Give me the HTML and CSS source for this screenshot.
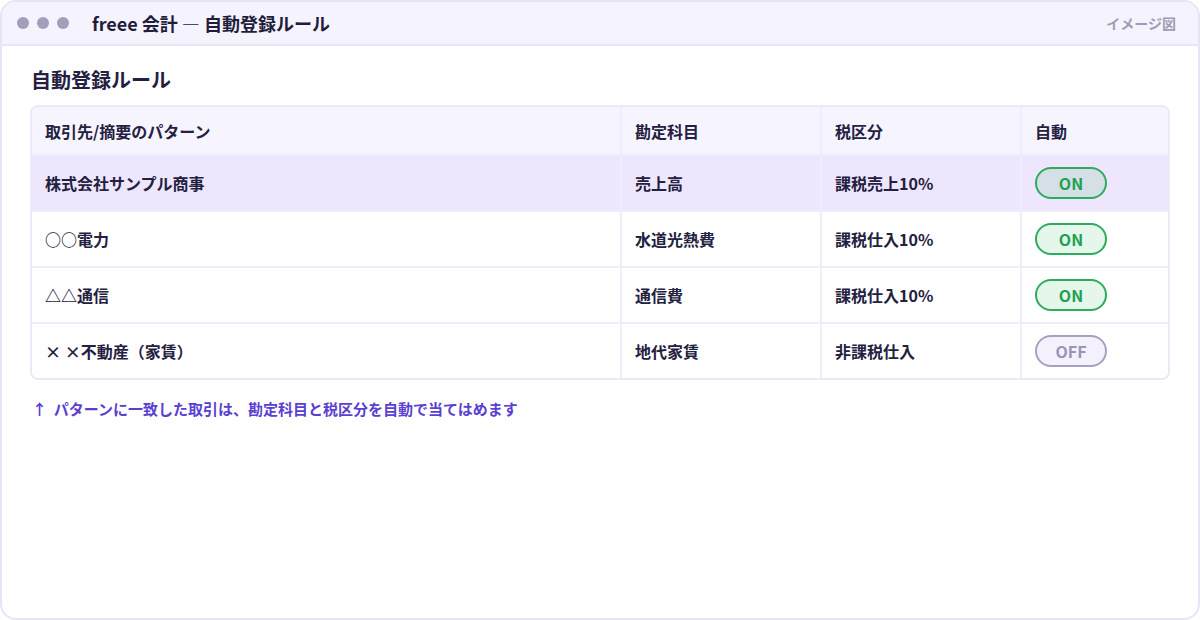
FILE: index.html
```html
<!DOCTYPE html>
<html lang="ja">
<head>
    <meta charset="UTF-8">
    <meta name="viewport" content="width=device-width, initial-scale=1.0">
    <title>freee 会計 — 自動登録ルール</title>
    <link rel="stylesheet" href="styles.css">
</head>
<body>
    <div class="window">
        <div class="titlebar">
            <div class="dots">
                <span class="dot"></span>
                <span class="dot"></span>
                <span class="dot"></span>
            </div>
            <div class="title">freee 会計 — 自動登録ルール</div>
            <div class="tag">イメージ図</div>
        </div>

        <div class="content">
            <h1>自動登録ルール</h1>

            <div class="table-box">
                <table class="rules">
                    <colgroup>
                        <col class="c-pattern">
                        <col class="c-account">
                        <col class="c-tax">
                        <col class="c-auto">
                    </colgroup>
                    <tr>
                        <th>取引先/摘要のパターン</th>
                        <th>勘定科目</th>
                        <th>税区分</th>
                        <th>自動</th>
                    </tr>
                    <tr class="selected">
                        <td>株式会社サンプル商事</td>
                        <td>売上高</td>
                        <td>課税売上10%</td>
                        <td><span class="toggle on">ON</span></td>
                    </tr>
                    <tr>
                        <td>○○電力</td>
                        <td>水道光熱費</td>
                        <td>課税仕入10%</td>
                        <td><span class="toggle on">ON</span></td>
                    </tr>
                    <tr>
                        <td>△△通信</td>
                        <td>通信費</td>
                        <td>課税仕入10%</td>
                        <td><span class="toggle on">ON</span></td>
                    </tr>
                    <tr>
                        <td>× ×不動産（家賃）</td>
                        <td>地代家賃</td>
                        <td>非課税仕入</td>
                        <td><span class="toggle off">OFF</span></td>
                    </tr>
                </table>
            </div>

            <p class="note">↑&nbsp; パターンに一致した取引は、勘定科目と税区分を自動で当てはめます</p>
        </div>
    </div>
</body>
</html>
```

FILE: styles.css
```css
body {
    margin: 0;
    padding: 0;
    font-family: "Noto Sans CJK JP", "Noto Sans", sans-serif;
    color: #23213f;
    background: #ffffff;
}

.window {
    box-sizing: border-box;
    width: 1200px;
    height: 620px;
    border: 2px solid #e7e4f6;
    border-radius: 16px;
    overflow: hidden;
    background: #ffffff;
}

.titlebar {
    display: flex;
    align-items: center;
    height: 42px;
    padding: 0 22px 0 15px;
    background: #f5f3fd;
    border-bottom: 2px solid #e9e5f8;
}

.dots {
    display: flex;
    gap: 8px;
}

.dot {
    width: 12px;
    height: 12px;
    border-radius: 50%;
    background: #a39fbb;
}

.title {
    margin-left: 23px;
    font-size: 18px;
    font-weight: 600;
    color: #1f1d3b;
}

.tag {
    margin-left: auto;
    font-size: 14px;
    font-weight: 600;
    color: #a09cb5;
}

.content {
    padding: 20px 28px 0 28px;
}

h1 {
    margin: 0 0 11px 1px;
    font-size: 20px;
    line-height: 28px;
    font-weight: 700;
    color: #23213f;
}

.table-box {
    border: 2px solid #ebe8f8;
    border-radius: 8px;
    overflow: hidden;
}

.rules {
    width: 100%;
    border-collapse: collapse;
    table-layout: fixed;
}

.c-pattern { width: 589px; }
.c-account { width: 200px; }
.c-tax { width: 200px; }

.rules th,
.rules td {
    text-align: left;
    padding: 0 13px;
    font-size: 16px;
    font-weight: 600;
    border-left: 2px solid #f0edfb;
    border-top: 2px solid #f0edfb;
}

.rules th:first-child,
.rules td:first-child {
    border-left: none;
}

.rules th {
    height: 47px;
    background: #f6f4fe;
    border-top: none;
}

.rules td {
    height: 54px;
}

.rules tr.selected td {
    background: #eee6fd;
}

.toggle {
    display: inline-block;
    box-sizing: border-box;
    width: 72px;
    height: 32px;
    line-height: 28px;
    border-radius: 16px;
    border: 2px solid #2fab5c;
    text-align: center;
    font-size: 16px;
    font-weight: 600;
    color: #21a052;
    background: #e4f7ea;
}

.selected .toggle {
    background: #d5dfe6;
}

.toggle.off {
    border-color: #a7a1c0;
    color: #9a94b5;
    background: #f4f1fc;
}

.note {
    margin: 18px 0 0 2px;
    font-size: 15px;
    font-weight: 600;
    color: #5a3fd1;
}
```
